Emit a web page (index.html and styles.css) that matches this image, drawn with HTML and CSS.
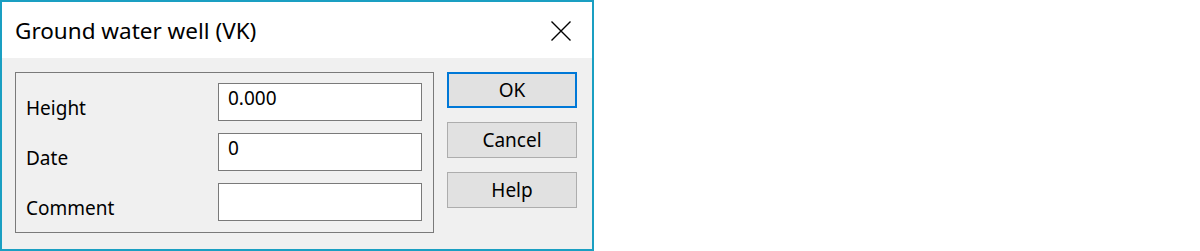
FILE: index.html
```html
<!DOCTYPE html>
<html lang="en">
<head>
    <meta charset="UTF-8">
    <meta name="viewport" content="width=device-width, initial-scale=1.0">
    <title>Ground water well (VK)</title>
    <link rel="stylesheet" href="styles.css">
</head>
<body>
    <div class="dialog">
        <!-- Pasek tytułu -->
        <div class="titlebar">
            <span class="title">Ground water well (VK)</span>
            <button class="close" title="Close">
                <svg width="20" height="20" viewBox="0 0 20 20">
                    <path d="M0.5 0.5 L19.5 19.5 M19.5 0.5 L0.5 19.5" stroke="#000" stroke-width="1.4" fill="none"/>
                </svg>
            </button>
        </div>

        <div class="content">
            <!-- Pola formularza -->
            <div class="group">
                <label class="label" for="height">Height</label>
                <input class="field" type="text" id="height" value="0.000">

                <label class="label" for="date">Date</label>
                <input class="field" type="text" id="date" value="0">

                <label class="label" for="comment">Comment</label>
                <input class="field" type="text" id="comment" value="">
            </div>

            <!-- Przyciski -->
            <div class="buttons">
                <button class="btn default">OK</button>
                <button class="btn">Cancel</button>
                <button class="btn">Help</button>
            </div>
        </div>
    </div>
</body>
</html>
```

FILE: styles.css
```css
body {
    margin: 0;
    background: #fff;
    font-family: "Noto Sans", "Open Sans", sans-serif;
    color: #000;
}
.dialog {
    width: 594px;
    height: 251px;
    box-sizing: border-box;
    border: 2px solid #1a9fc2;
    background: #f0f0f0;
    display: flex;
    flex-direction: column;
}
.titlebar {
    height: 56px;
    background: #fff;
    display: flex;
    align-items: center;
    justify-content: space-between;
    padding-left: 13px;
}
.title {
    font-size: 22.5px;
    margin-top: 1px;
}
.close {
    border: none;
    background: transparent;
    padding: 0;
    width: 20px;
    height: 20px;
    margin-right: 21px;
    margin-top: 1px;
    display: flex;
}
.content {
    display: flex;
    padding: 14px 0 0 13px;
}
.group {
    width: 419px;
    height: 161px;
    box-sizing: border-box;
    border: 1px solid #7a7a7a;
    display: grid;
    grid-template-columns: 192px 204px;
    grid-auto-rows: 38px;
    row-gap: 12px;
    padding: 10px 0 0 10px;
}
.label {
    font-size: 19px;
    align-self: end;
    line-height: 1;
    padding-bottom: 3px;
}
.field {
    box-sizing: border-box;
    width: 204px;
    height: 38px;
    border: 1px solid #7a7a7a;
    background: #fff;
    font-family: inherit;
    font-size: 19px;
    padding: 0 9px 8px;
    margin: 0;
    outline: none;
}
.buttons {
    display: flex;
    flex-direction: column;
    gap: 14px;
    margin-left: 13px;
}
.btn {
    width: 130px;
    height: 36px;
    box-sizing: border-box;
    border: 1px solid #adadad;
    background: #e1e1e1;
    font-family: inherit;
    font-size: 19px;
    padding: 0;
    cursor: pointer;
}
.btn.default {
    border: 2px solid #0078d7;
}
```
